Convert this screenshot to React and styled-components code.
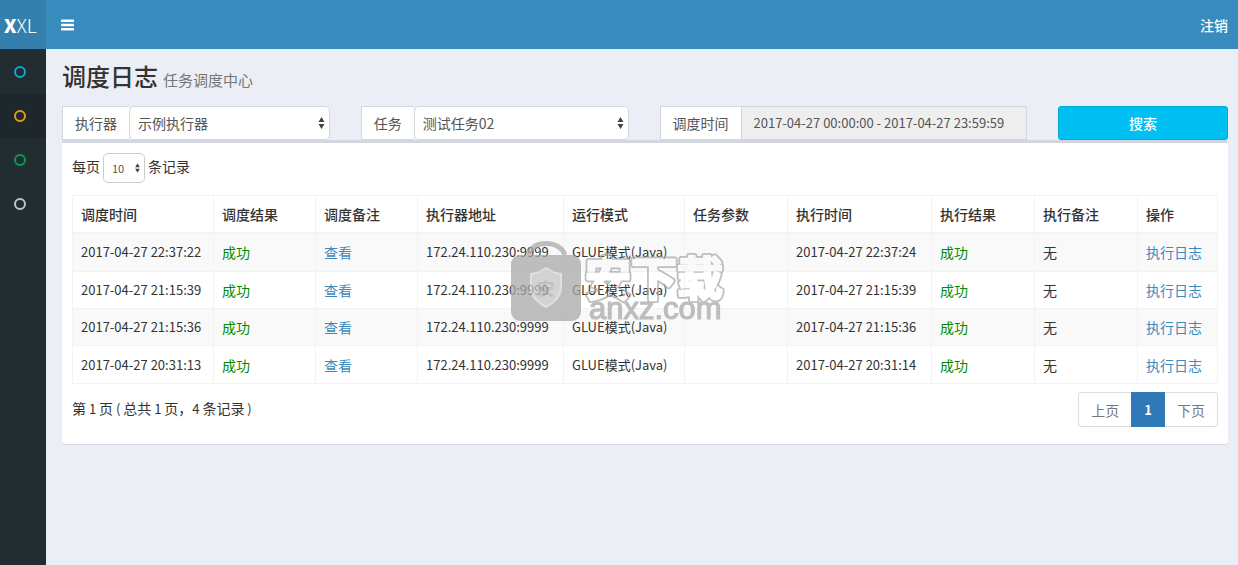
import React from 'react';
import styled, { createGlobalStyle } from 'styled-components';

const GlobalStyle = createGlobalStyle`
  * { box-sizing: border-box; }
  body {
    margin: 0;
    background: #ebeef4;
    color: #333;
    font-family: "Noto Sans CJK SC", sans-serif;
    font-size: 14px;
    line-height: 20px;
  }
  button, input, select { font: inherit; }
  a { color: #3a8bbd; text-decoration: none; }
`;

const Page = styled.div`
  display: grid;
  grid-template-columns: 46px minmax(0, 1fr);
  grid-template-rows: 49px 1fr;
  min-height: 100vh;
`;

const Logo = styled.a`
  display: flex;
  align-items: center;
  padding-left: 4px;
  background: #347fab;
  color: #fff;
  font-size: 19px;
  font-weight: 300;
  b { font-weight: 900; }
`;

const TopBar = styled.header`
  display: flex;
  align-items: center;
  justify-content: space-between;
  padding: 0 10px 0 15px;
  background: #378bbd;
  a { color: #fff; font-weight: 500; }
`;

const MenuButton = styled.button`
  display: flex;
  padding: 0;
  border: 0;
  background: none;
  color: #fff;
  cursor: pointer;
`;

const Sidebar = styled.nav`
  background: #222d32;
  padding-top: 1px;
`;

const SideLink = styled.a`
  display: flex;
  align-items: center;
  height: 44px;
  padding-left: 14px;
  background: ${(p) => (p.$active ? '#1e282c' : 'transparent')};
`;

const Ring = styled.span`
  width: 12px;
  height: 12px;
  border: 2px solid ${(p) => p.$color};
  border-radius: 50%;
`;

const Content = styled.main`
  padding: 14px 10px 15px 16px;
`;

const Title = styled.h1`
  display: flex;
  align-items: baseline;
  gap: 5px;
  height: 26px;
  margin: 0 0 17px;
  font-size: 24px;
  font-weight: 500;
  line-height: 26px;
  small {
    color: #777;
    font-size: 15px;
    font-weight: 400;
  }
`;

const Filters = styled.form`
  display: grid;
  grid-template-columns: 268fr 268fr 368fr 170fr;
  gap: 31px;
`;

const Group = styled.div`
  display: flex;
  height: 34px;
`;

const Addon = styled.label`
  display: flex;
  align-items: center;
  flex: none;
  padding: 0 12px;
  border: 1px solid #d2d6de;
  border-right: 0;
  background: #fff;
  color: #555;
`;

const SelectBox = styled.span`
  position: relative;
  display: flex;
  flex: 1;
  min-width: 0;
  height: ${(p) => (p.$small ? '30px' : '34px')};
  svg {
    position: absolute;
    top: 50%;
    right: 4px;
    transform: translateY(-50%);
    pointer-events: none;
  }
`;

const Select = styled.select`
  width: 100%;
  height: 100%;
  appearance: none;
  padding: 0 8px;
  border: 1px solid ${(p) => (p.$small ? '#ccc' : '#d2d6de')};
  border-radius: 5px;
  background: #fff;
  color: #555;
  font-size: ${(p) => (p.$small ? '11px' : '14px')};
`;

const DateInput = styled.input`
  flex: 1;
  min-width: 0;
  padding: 0 12px;
  border: 1px solid #d2d6de;
  border-radius: 0;
  background: #eee;
  color: #555;
  font-size: 13px;
`;

const SearchButton = styled.button`
  height: 34px;
  border: 1px solid #00acd6;
  border-radius: 3px;
  background: #00c0f3;
  color: #fff;
  font-weight: 500;
  cursor: pointer;
`;

const Box = styled.section`
  padding: 10px 10px 17px;
  border-top: 3px solid #d2d6de;
  border-radius: 3px;
  background: #fff;
  box-shadow: 0 1px 1px rgba(0, 0, 0, 0.1);
`;

const LengthLabel = styled.label`
  display: flex;
  gap: 3px;
  height: 30px;
  margin-bottom: 12px;
  line-height: 26px;
  ${SelectBox} { flex: none; width: 42px; }
`;

const Table = styled.table`
  width: 100%;
  height: 189px;
  table-layout: fixed;
  border-collapse: collapse;
  th, td {
    padding: 8px;
    border: 1px solid #f3f3f3;
    text-align: left;
    white-space: nowrap;
  }
  th {
    border-bottom-width: 2px;
    font-weight: 500;
  }
  tbody tr:nth-child(odd) { background: #f9f9f9; }
`;

const LatinCell = styled.td`
  font-size: 13px;
`;

const Latin = styled.span`
  font-size: 13px;
`;

const SuccessCell = styled.td`
  color: #008b00;
`;

const Footer = styled.div`
  display: flex;
  justify-content: space-between;
  align-items: flex-start;
  margin-top: 8px;
`;

const Info = styled.div`
  line-height: 32px;
`;

const Pager = styled.div`
  display: flex;
`;

const PageButton = styled.button`
  height: 35px;
  padding: 0 12px;
  border: 1px solid ${(p) => (p.$current ? '#337ab7' : '#ddd')};
  background: ${(p) => (p.$current ? '#2f79b9' : '#fff')};
  color: ${(p) => (p.$current ? '#fff' : '#777')};
  font-size: ${(p) => (p.$current ? '13px' : '14px')};
  font-weight: ${(p) => (p.$current ? 700 : 400)};
  &:first-child { border-radius: 4px 0 0 4px; border-right: 0; }
  &:last-child { border-radius: 0 4px 4px 0; border-left: 0; }
`;

const Overlay = styled.div`
  position: fixed;
  inset: 0;
  display: grid;
  place-items: center;
  pointer-events: none;
`;

function Arrows({ small }) {
  const s = small ? 7 : 9;
  return (
    <svg width={s} height={small ? 11 : 14} viewBox="0 0 9 14" aria-hidden="true">
      <path d="M4.5 1 7.500 6H1.500zM4.5 13 7.500 8H1.500z" fill="#444" />
    </svg>
  );
}

function Watermark() {
  const mark = { x: 74, y: 54, fontSize: 46, fontWeight: 700, strokeLinejoin: 'round' };
  return (
    <Overlay>
      <svg width="216" height="83" viewBox="0 0 216 83" opacity="0.75">
        <defs>
          <mask id="hollow" maskUnits="userSpaceOnUse" x="0" y="0" width="216" height="83">
            <rect width="216" height="83" fill="#fff" />
            <text {...mark} fill="#000" stroke="#000" strokeWidth="2.5">安下载</text>
          </mask>
        </defs>
        <path d="M17 14C20 6 27 2.500 35 2.500S51 6 54 14" fill="none" stroke="#a9a9a9" strokeWidth="5" />
        <rect y="14" width="70" height="66" rx="9" fill="#a9a9a9" />
        <path d="M35 27q7 5 15 6v13q0 12-15 20Q20 58 20 46V33q8-1 15-6z" fill="#c4c4c4" stroke="#d6d6d6" strokeWidth="2" />
        <text x="35" y="54" fontSize="17" fontWeight="700" textAnchor="middle" fill="#a9a9a9">安</text>
        <g mask="url(#hollow)">
          <text {...mark} fill="#a9a9a9" stroke="#a9a9a9" strokeWidth="6">安下载</text>
        </g>
        <text x="78" y="78" fontSize="31" fontFamily="Liberation Sans, sans-serif" fill="#a9a9a9" stroke="#a9a9a9" strokeWidth="1.2">anxz.com</text>
      </svg>
    </Overlay>
  );
}

const columns = [
  ['调度时间', 141], ['调度结果', 102], ['调度备注', 102], ['执行器地址', 146], ['运行模式', 121],
  ['任务参数', 103], ['执行时间', 144], ['执行结果', 103], ['执行备注', 103], ['操作', 80],
];

const rows = [
  ['2017-04-27 22:37:22', '2017-04-27 22:37:24'],
  ['2017-04-27 21:15:39', '2017-04-27 21:15:39'],
  ['2017-04-27 21:15:36', '2017-04-27 21:15:36'],
  ['2017-04-27 20:31:13', '2017-04-27 20:31:14'],
];

const menu = [
  ['任务管理', '#12a8d2'],
  ['调度日志', '#e39b1c'],
  ['执行器管理', '#109659'],
  ['使用教程', '#b8c7ce'],
];

export default function App() {
  return (
    <>
      <GlobalStyle />
      <Page>
        <Logo href="#"><b>X</b>XL</Logo>
        <TopBar>
          <MenuButton type="button" aria-label="菜单">
            <svg width="13" height="12" viewBox="0 0 13 12" fill="currentColor">
              <rect y="0.5" width="13" height="2.5" rx="0.5" />
              <rect y="4.8" width="13" height="2.5" rx="0.5" />
              <rect y="9.1" width="13" height="2.5" rx="0.5" />
            </svg>
          </MenuButton>
          <a href="#">注销</a>
        </TopBar>
        <Sidebar>
          {menu.map(([name, color]) => (
            <SideLink key={name} href="#" $active={name === '调度日志'} aria-label={name}>
              <Ring $color={color} />
            </SideLink>
          ))}
        </Sidebar>
        <Content>
          <Title>调度日志<small>任务调度中心</small></Title>
          <Filters>
            <Group>
              <Addon htmlFor="executor">执行器</Addon>
              <SelectBox>
                <Select id="executor"><option>示例执行器</option></Select>
                <Arrows />
              </SelectBox>
            </Group>
            <Group>
              <Addon htmlFor="job">任务</Addon>
              <SelectBox>
                <Select id="job"><option>测试任务02</option></Select>
                <Arrows />
              </SelectBox>
            </Group>
            <Group>
              <Addon htmlFor="range">调度时间</Addon>
              <DateInput id="range" readOnly value="2017-04-27 00:00:00 - 2017-04-27 23:59:59" />
            </Group>
            <SearchButton type="button">搜索</SearchButton>
          </Filters>
          <Box>
            <LengthLabel>
              每页
              <SelectBox $small>
                <Select $small><option>10</option></Select>
                <Arrows small />
              </SelectBox>
              条记录
            </LengthLabel>
            <Table>
              <colgroup>
                {columns.map(([name, width]) => <col key={name} width={width} />)}
              </colgroup>
              <thead>
                <tr>{columns.map(([name]) => <th key={name}>{name}</th>)}</tr>
              </thead>
              <tbody>
                {rows.map(([trigger, handle]) => (
                  <tr key={trigger}>
                    <LatinCell>{trigger}</LatinCell>
                    <SuccessCell>成功</SuccessCell>
                    <td><a href="#">查看</a></td>
                    <LatinCell>172.24.110.230:9999</LatinCell>
                    <LatinCell>GLUE模式(Java)</LatinCell>
                    <td />
                    <LatinCell>{handle}</LatinCell>
                    <SuccessCell>成功</SuccessCell>
                    <td>无</td>
                    <td><a href="#">执行日志</a></td>
                  </tr>
                ))}
              </tbody>
            </Table>
            <Footer>
              <Info>第<Latin> 1 </Latin>页<Latin> ( </Latin>总共<Latin> 1 </Latin>页，<Latin>4 </Latin>条记录<Latin> )</Latin></Info>
              <Pager>
                <PageButton type="button">上页</PageButton>
                <PageButton type="button" $current>1</PageButton>
                <PageButton type="button">下页</PageButton>
              </Pager>
            </Footer>
          </Box>
        </Content>
      </Page>
      <Watermark />
    </>
  );
}
